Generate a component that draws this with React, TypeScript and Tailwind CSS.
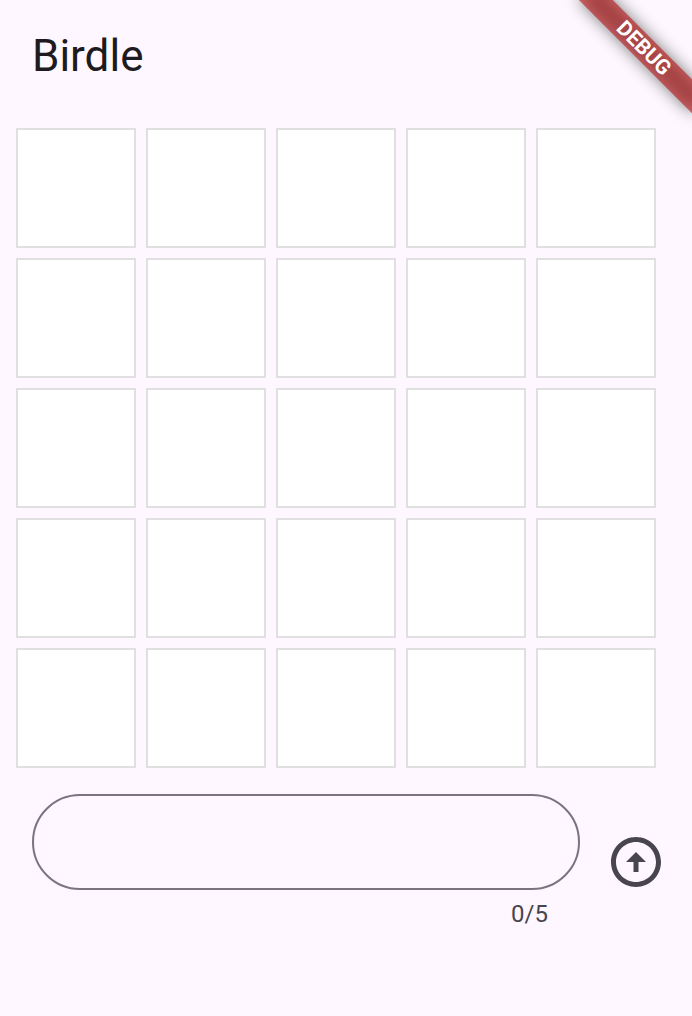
import { useState } from "react";
import type { FormEvent } from "react";

const ROWS = 5;
const WORD_LENGTH = 5;

function DebugBanner() {
  return (
    <div className="pointer-events-none absolute top-0 right-0 size-40 overflow-hidden">
      <div className="absolute top-14 left-20 h-6 w-40 origin-[80px_-56px] rotate-45">
        <div className="absolute inset-0 bg-black/50 blur-[8px]" />
        <div className="relative flex h-full items-center justify-center bg-[#b71c1c]/63 text-[21px] leading-none font-bold text-white">
          DEBUG
        </div>
      </div>
    </div>
  );
}

function Tile({ letter }: { letter: string }) {
  return (
    <div className="flex size-[120px] items-center justify-center border-2 border-[#e0e0e0] bg-white text-[44px] uppercase">
      {letter}
    </div>
  );
}

function Board({ guesses }: { guesses: string[] }) {
  return (
    <div className="flex flex-col gap-2.5">
      {Array.from({ length: ROWS }, (_, row) => (
        <div key={row} className="flex gap-2.5">
          {Array.from({ length: WORD_LENGTH }, (_, col) => (
            <Tile key={col} letter={guesses[row]?.[col] ?? ""} />
          ))}
        </div>
      ))}
    </div>
  );
}

function GuessInput({ onSubmit }: { onSubmit: (word: string) => void }) {
  const [value, setValue] = useState("");

  const submit = (event: FormEvent) => {
    event.preventDefault();
    if (value.length === WORD_LENGTH) {
      onSubmit(value);
      setValue("");
    }
  };

  return (
    <form onSubmit={submit} className="mt-2.5 flex items-center">
      <div className="flex flex-1 flex-col p-4">
        <input
          type="text"
          aria-label="Guess"
          maxLength={WORD_LENGTH}
          value={value}
          onChange={(event) => setValue(event.target.value)}
          className="h-24 w-full rounded-full border-2 border-[#79747e] bg-transparent px-8 text-[32px] text-[#1d1b20] outline-none"
        />
        <p className="mt-2 pr-8 text-right text-2xl leading-8 text-[#49454f]">
          {value.length}/{WORD_LENGTH}
        </p>
      </div>
      <button
        type="submit"
        aria-label="Submit guess"
        className="flex size-20 items-center justify-center rounded-full text-[#49454f]"
      >
        <svg viewBox="0 0 24 24" className="size-15" fill="currentColor" aria-hidden="true">
          <path d="M12 20c-4.42 0-8-3.58-8-8s3.58-8 8-8 8 3.58 8 8-3.58 8-8 8m0 2c5.52 0 10-4.48 10-10S17.52 2 12 2 2 6.48 2 12s4.48 10 10 10zm-1-10v4h2v-4h3l-4-4-4 4h3z" />
        </svg>
      </button>
    </form>
  );
}

export default function App() {
  const [guesses, setGuesses] = useState<string[]>([]);

  return (
    <div className="relative min-h-screen bg-[#fef7ff] font-[Roboto,sans-serif] text-[#1d1b20]">
      <header className="flex h-28 items-center px-8">
        <h1 className="text-[44px] leading-14 font-normal">Birdle</h1>
      </header>
      <main className="p-4">
        <Board guesses={guesses} />
        <GuessInput onSubmit={(word) => setGuesses((all) => [...all, word].slice(0, ROWS))} />
      </main>
      <DebugBanner />
    </div>
  );
}
